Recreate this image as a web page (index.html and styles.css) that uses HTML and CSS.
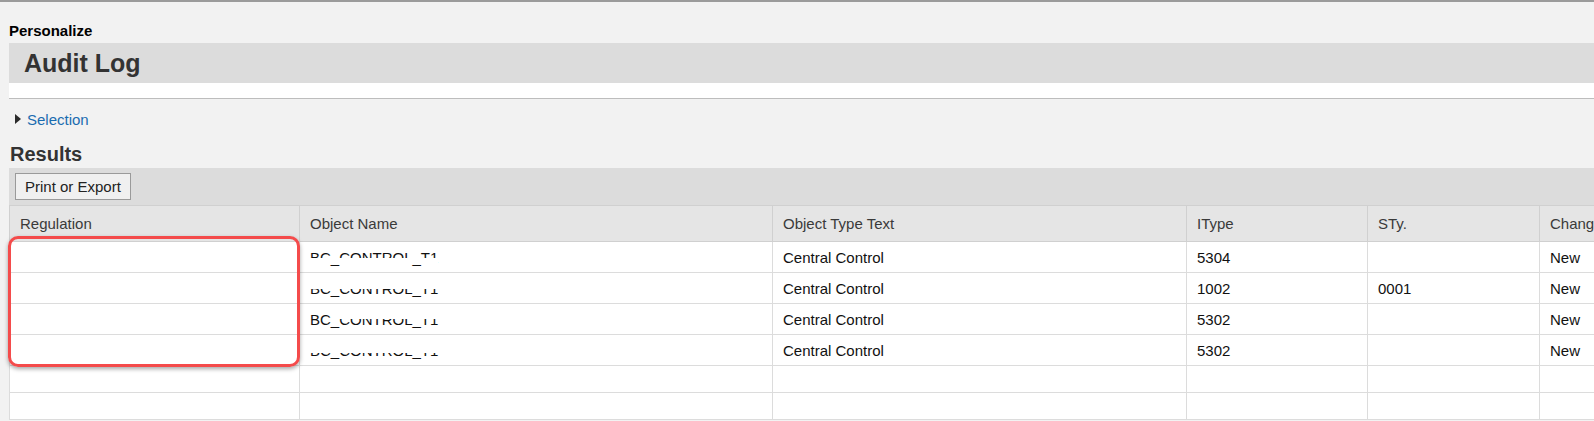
FILE: index.html
```html
<!DOCTYPE html>
<html>
<head>
<meta charset="utf-8">
<link rel="stylesheet" href="styles.css">
</head>
<body>
<div class="page">
  <div class="personalize">Personalize</div>
  <div class="title-band"><h1>Audit Log</h1></div>
  <div class="title-under"></div>
  <div class="selection"><span class="tri"></span><a class="sel-link">Selection</a></div>
  <h2 class="results">Results</h2>
  <div class="toolbar"><button class="btn">Print or Export</button></div>
  <div class="table-wrap">
    <table class="grid">
      <colgroup>
        <col class="c1"><col class="c2"><col class="c3"><col class="c4"><col class="c5"><col class="c6">
      </colgroup>
      <thead>
        <tr><th>Regulation</th><th>Object Name</th><th>Object Type Text</th><th>IType</th><th>STy.</th><th>Change Type</th></tr>
      </thead>
      <tbody>
        <tr class="data"><td></td><td><span class="redact r1">BC_CONTROL_T1</span></td><td>Central Control</td><td>5304</td><td></td><td>New</td></tr>
        <tr class="data"><td></td><td><span class="redact r2">BC_CONTROL_T1</span></td><td>Central Control</td><td>1002</td><td>0001</td><td>New</td></tr>
        <tr class="data"><td></td><td><span class="redact r3">BC_CONTROL_T1</span></td><td>Central Control</td><td>5302</td><td></td><td>New</td></tr>
        <tr class="data"><td></td><td><span class="redact r4">BC_CONTROL_T1</span></td><td>Central Control</td><td>5302</td><td></td><td>New</td></tr>
        <tr class="empty"><td></td><td></td><td></td><td></td><td></td><td></td></tr>
        <tr class="empty"><td></td><td></td><td></td><td></td><td></td><td></td></tr>
      </tbody>
    </table>
    <div class="highlight"></div>
  </div>
</div>
</body>
</html>
```

FILE: styles.css
```css
html, body {
  margin: 0;
  padding: 0;
  background: #f2f2f2;
  overflow: hidden;
}
body {
  border-top: 2px solid #9b9b9b;
  font-family: "Liberation Sans", Arial, sans-serif;
  color: #222;
}
.page {
  padding-left: 9px;
}
.personalize {
  font-size: 15px;
  font-weight: bold;
  color: #000;
  line-height: 17px;
  padding-top: 20px;
  padding-bottom: 4px;
}
.title-band {
  background: #dcdcdc;
  height: 40px;
  display: flex;
  align-items: center;
  padding-left: 15px;
}
.title-band h1 {
  margin: 0;
  font-size: 25px;
  font-weight: bold;
  color: #333;
  line-height: 28px;
}
.title-under {
  background: #fff;
  height: 15px;
  border-bottom: 1px solid #bdbdbd;
}
.selection {
  display: flex;
  align-items: center;
  height: 40px;
  padding-left: 6px;
}
.tri {
  width: 0;
  height: 0;
  border-top: 5.5px solid transparent;
  border-bottom: 5.5px solid transparent;
  border-left: 6px solid #2b2b2b;
  margin-right: 6px;
}
.sel-link {
  font-size: 15px;
  color: #1a6cb0;
  line-height: 17px;
}
.results {
  margin: 0;
  font-size: 20px;
  font-weight: bold;
  color: #333;
  line-height: 24px;
  padding: 3px 0 2px 1px;
}
.toolbar {
  background: #dcdcdc;
  height: 37px;
  display: flex;
  align-items: center;
  padding-left: 6px;
}
.btn {
  font-family: "Liberation Sans", Arial, sans-serif;
  font-size: 15px;
  color: #222;
  background: #f0f0f0;
  border: 1px solid #9a9a9a;
  height: 27px;
  padding: 0 9px;
  margin: 0;
  border-radius: 0;
}
.table-wrap {
  position: relative;
  width: 1700px;
}
.grid {
  border-collapse: collapse;
  table-layout: fixed;
  width: 1700px;
  font-size: 15px;
}
.c1 { width: 290px; }
.c2 { width: 473px; }
.c3 { width: 414px; }
.c4 { width: 181px; }
.c5 { width: 172px; }
.c6 { width: 170px; }
.grid th {
  background: #e5e5e5;
  color: #3a3a3a;
  font-weight: normal;
  text-align: left;
  height: 36px;
  padding: 0 10px;
  border: 1px solid #d0d0d0;
  white-space: nowrap;
  overflow: hidden;
  box-sizing: border-box;
}
.grid td {
  background: #fff;
  color: #111;
  padding: 0 10px;
  border: 1px solid #dcdcdc;
  white-space: nowrap;
  overflow: hidden;
  box-sizing: border-box;
}
.grid tr.data td { height: 31px; }
.grid tr.empty td { height: 27px; }
.redact {
  position: relative;
  display: inline-block;
  line-height: 17px;
}
.redact::after {
  content: "";
  position: absolute;
  background: #fff;
}
.r1::after { left: 0; right: 0; top: 9px; height: 5px; }
.r2::after { left: 0; right: 0; top: 0; height: 9px; }
.r3::after { left: 24px; right: 0; top: 0; height: 8px; }
.r4::after { left: 0; right: 0; top: 0; height: 11px; }
.highlight {
  position: absolute;
  left: -1px;
  top: 31px;
  width: 286px;
  height: 125px;
  border: 3px solid #f44b4b;
  border-radius: 10px;
  box-shadow: 0 2px 4px rgba(0,0,0,0.35);
  pointer-events: none;
}
```
